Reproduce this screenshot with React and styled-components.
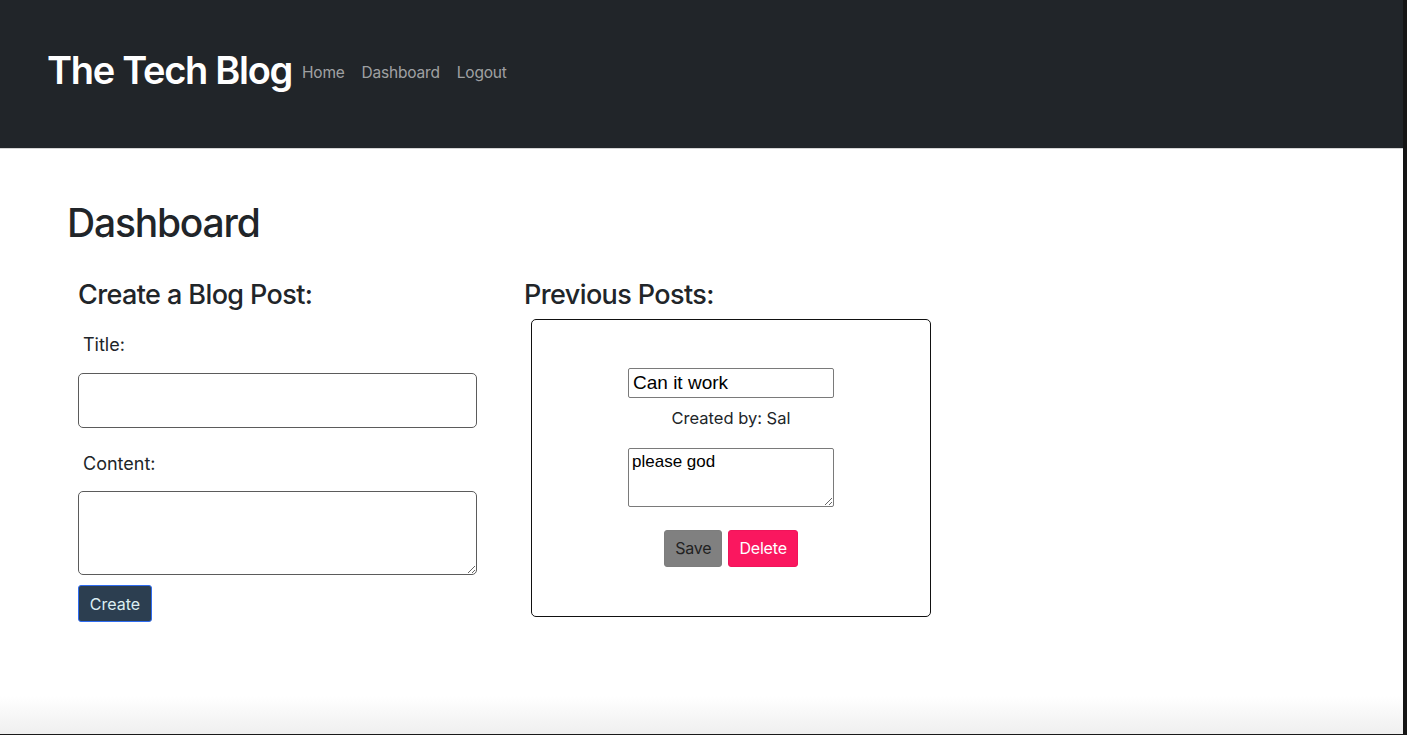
import React, { useState } from 'react';
import styled, { createGlobalStyle } from 'styled-components';

const GlobalStyle = createGlobalStyle`
  * { box-sizing: border-box; }
  body {
    margin: 0;
    font-family: Inter, "Noto Sans", "Liberation Sans", sans-serif;
    color: #212529;
    background: #fff;
  }
`;

const Frame = styled.div`
  height: 735px;
  border-right: 4px solid #151515;
  border-bottom: 1px solid #1a1a1a;
  background: linear-gradient(to bottom, #fff calc(100% - 38px), #efefef);
  overflow: hidden;
`;

const Header = styled.header`
  height: 149px;
  background: #212529;
  border-bottom: 1px solid #d4d4d4;
  display: flex;
  align-items: center;
  padding: 0 0 6px 47px;
`;

const Brand = styled.h1`
  margin: 0;
  font-size: 38px;
  font-weight: 600;
  letter-spacing: -1.3px;
  color: #fff;
  line-height: 1.2;
`;

const Nav = styled.nav`
  display: flex;
  gap: 17px;
  margin-left: 10px;
  padding-top: 2px;
`;

const NavLink = styled.a`
  font-size: 15.5px;
  letter-spacing: -0.2px;
  color: rgba(255, 255, 255, 0.58);
  text-decoration: none;
  cursor: pointer;
`;

const Main = styled.main`
  padding: 51px 0 0 67px;
`;

const PageTitle = styled.h2`
  margin: 0 0 32px;
  font-size: 39px;
  font-weight: 500;
  line-height: 1.2;
  letter-spacing: -1.2px;
`;

const Columns = styled.div`
  display: flex;
  gap: 47px;
  padding-left: 11px;
`;

const Column = styled.section`
  width: ${p => p.$width}px;
  display: flex;
  flex-direction: column;
`;

const SectionTitle = styled.h3`
  margin: 0 0 ${p => p.$gap}px;
  font-size: 27px;
  font-weight: 500;
  line-height: 1.2;
  letter-spacing: -0.6px;
`;

const Label = styled.label`
  display: block;
  font-size: 18px;
  margin: 0 0 17px 5px;
  line-height: 1.2;
`;

const Field = styled.input`
  width: 399px;
  height: 55px;
  border: 1px solid #5b5b5b;
  border-radius: 5px;
  margin-bottom: 25px;
  font-size: 16px;
  padding: 6px 10px;
`;

const Area = styled.textarea`
  width: 399px;
  height: 84px;
  border: 1px solid #5b5b5b;
  border-radius: 5px;
  margin: 0 0 10px;
  font-size: 16px;
  display: block;
`;

const CreateButton = styled.button`
  align-self: flex-start;
  width: 74px;
  height: 37px;
  background: #2c3e50;
  color: #dceff3;
  border: 1px solid #2f6cf0;
  border-radius: 3px;
  font-family: inherit;
  font-size: 16px;
  cursor: pointer;
`;

const Card = styled.div`
  margin-left: 7px;
  width: 400px;
  height: 298px;
  border: 1px solid #111;
  border-radius: 5px;
  display: flex;
  flex-direction: column;
  align-items: center;
  padding-top: 48px;
`;

const PostTitle = styled.input`
  width: 206px;
  height: 30px;
  border: 1px solid #7a7a7a;
  border-radius: 2px;
  font-family: "Liberation Sans", Arial, sans-serif;
  font-size: 19px;
  color: #000;
  padding: 2px 4px;
`;

const Author = styled.p`
  margin: 11px 0 19px;
  font-size: 16.5px;
  line-height: 1.2;
`;

const PostBody = styled.textarea`
  width: 206px;
  height: 59px;
  border: 1px solid #7a7a7a;
  border-radius: 2px;
  font-family: "Liberation Sans", Arial, sans-serif;
  font-size: 17px;
  color: #000;
  padding: 3px 3px;
  resize: vertical;
`;

const Actions = styled.div`
  display: flex;
  gap: 6px;
  margin-top: 23px;
`;

const ActionButton = styled.button`
  height: 37px;
  padding: 0 10px;
  border-radius: 3px;
  border: 1px solid ${p => (p.$danger ? '#f0145a' : '#7d7d7d')};
  background: ${p => (p.$danger ? '#fa175f' : '#808080')};
  color: ${p => (p.$danger ? '#fff' : '#222')};
  font-family: inherit;
  font-size: 16px;
  letter-spacing: -0.2px;
  cursor: pointer;
`;

export default function App() {
  const [title, setTitle] = useState('Can it work');
  const [body, setBody] = useState('please god');

  return (
    <>
      <GlobalStyle />
      <Frame>
        <Header>
          <Brand>The Tech Blog</Brand>
          <Nav>
            <NavLink>Home</NavLink>
            <NavLink>Dashboard</NavLink>
            <NavLink>Logout</NavLink>
          </Nav>
        </Header>
        <Main>
          <PageTitle>Dashboard</PageTitle>
          <Columns>
            <Column $width={399}>
              <SectionTitle $gap={23}>Create a Blog Post:</SectionTitle>
              <Label>Title:</Label>
              <Field type="text" />
              <Label>Content:</Label>
              <Area />
              <CreateButton>Create</CreateButton>
            </Column>
            <Column $width={420}>
              <SectionTitle $gap={8}>Previous Posts:</SectionTitle>
              <Card>
                <PostTitle value={title} onChange={e => setTitle(e.target.value)} />
                <Author>Created by: Sal</Author>
                <PostBody value={body} onChange={e => setBody(e.target.value)} />
                <Actions>
                  <ActionButton>Save</ActionButton>
                  <ActionButton $danger>Delete</ActionButton>
                </Actions>
              </Card>
            </Column>
          </Columns>
        </Main>
      </Frame>
    </>
  );
}
